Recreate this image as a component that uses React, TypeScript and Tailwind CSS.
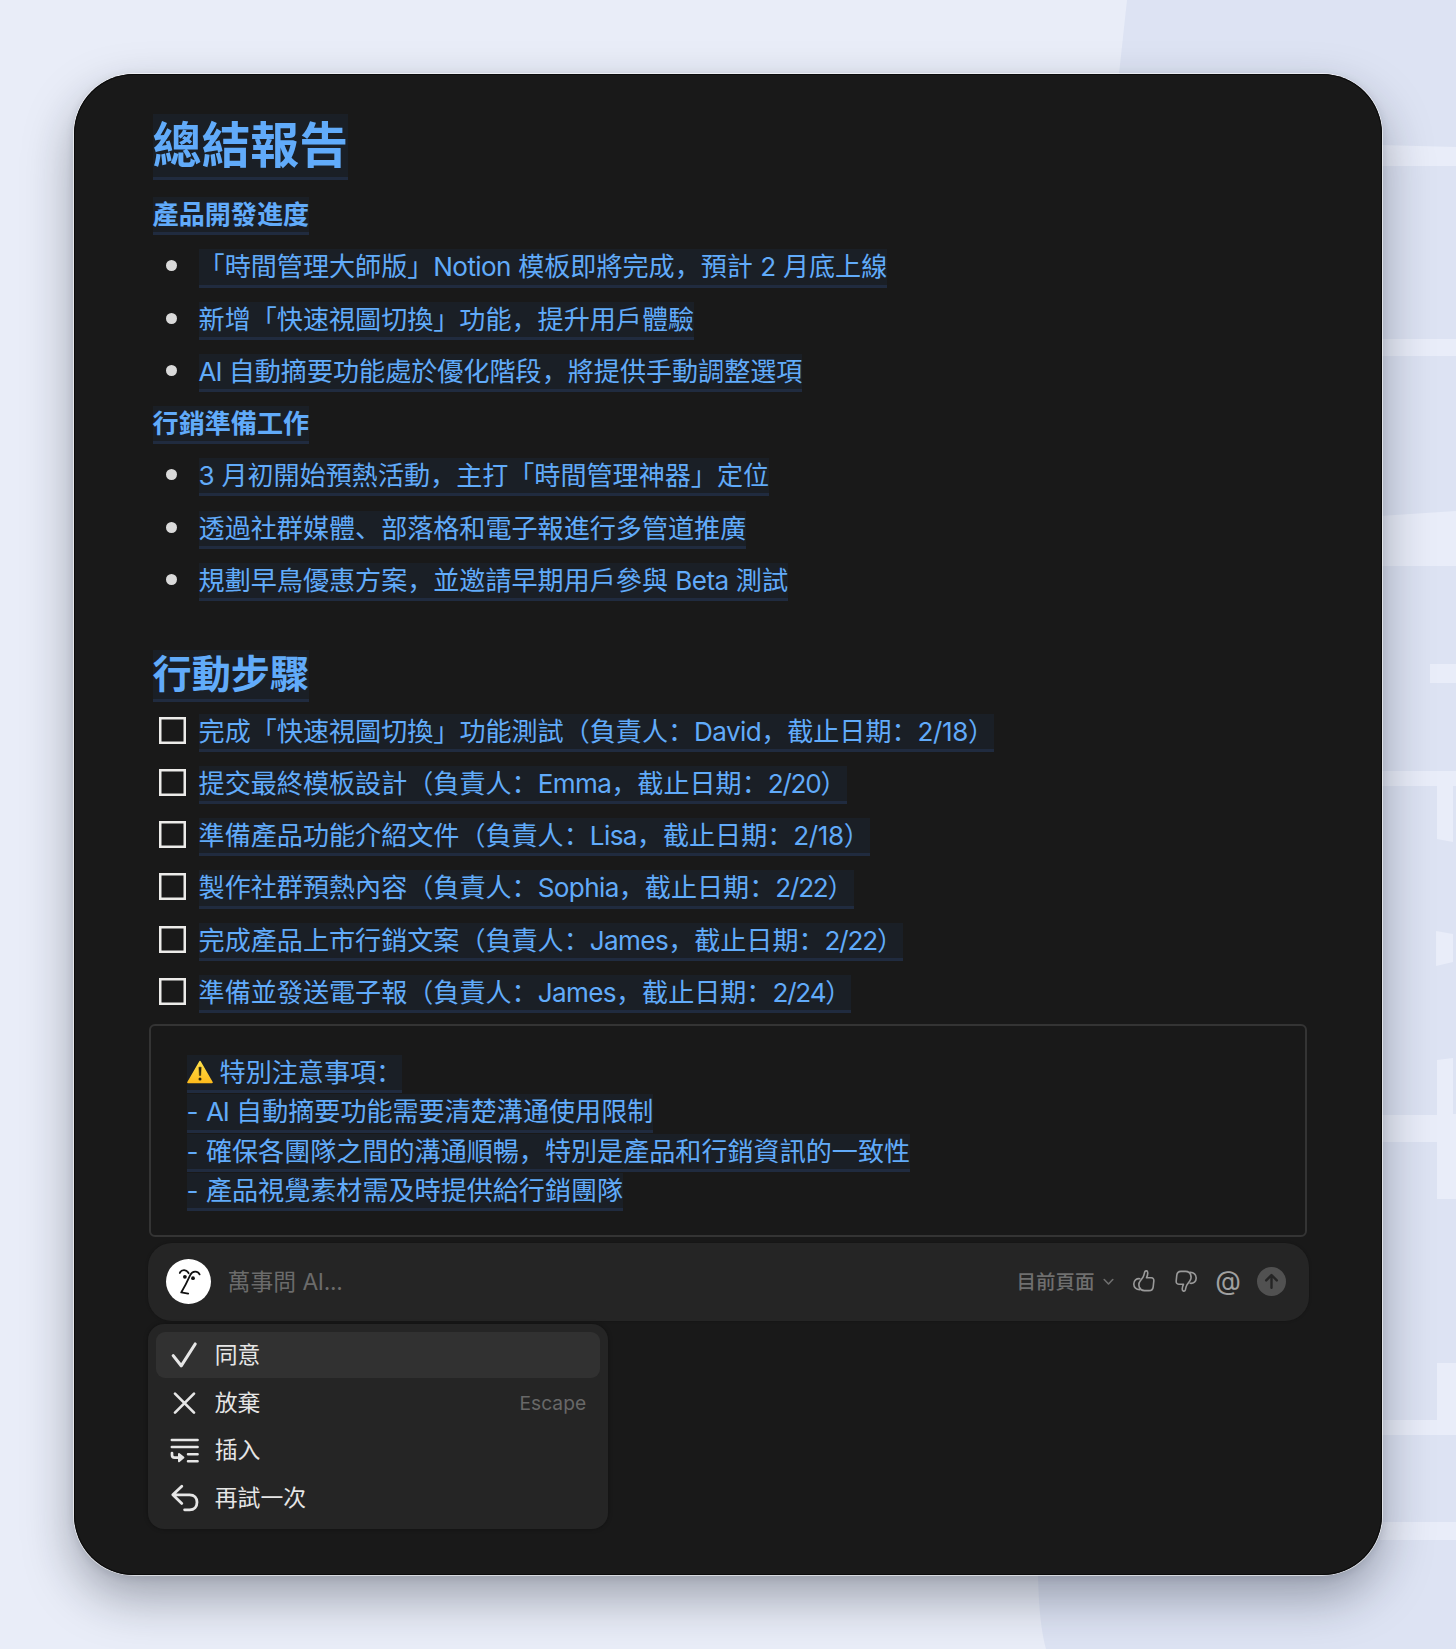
import React from "react";

const BASE = "text-[26.08px] leading-[36px]";

function tracking(run: string) {
  if (/^2\/2/.test(run)) return "tracking-[-1.2px]";
  if (/^2\/1/.test(run)) return "tracking-[-0.4px]";
  if (run === "AI") return "tracking-[-1.1px]";
  return "tracking-[-0.6px]";
}

/* Splits Latin runs out so that they can be tracked separately from the CJK text. */
function Mixed({ text }: { text: string }) {
  const parts = text.split(/([A-Za-z0-9/]+)/);
  return (
    <>
      {parts.map((part, i) =>
        i % 2 === 1 ? (
          <span key={i} className={tracking(part)}>
            {part}
          </span>
        ) : (
          <React.Fragment key={i}>{part}</React.Fragment>
        )
      )}
    </>
  );
}

function Mark({ children, className = "" }: { children: React.ReactNode; className?: string }) {
  return (
    <span
      className={`block w-fit whitespace-pre border-b-[3px] border-[#202b3f] bg-[#1a1f26] text-[#61abfa] ${className}`}
    >
      {children}
    </span>
  );
}

function SubHeading({ text }: { text: string }) {
  return <Mark className={`h-[38.2px] font-bold ${BASE}`}>{text}</Mark>;
}

function Bullet({ text }: { text: string }) {
  return (
    <li className="flex h-[38.2px]">
      <span className="mt-[11px] ml-[13.7px] mr-[21.3px] size-[11px] shrink-0 rounded-full bg-[#dadada]" />
      <Mark className={`h-[38.2px] ${BASE}`}>
        <Mixed text={text} />
      </Mark>
    </li>
  );
}

function Todo({ text }: { text: string }) {
  return (
    <li className="flex h-[38.2px]">
      <span className="mt-[3px] ml-[6px] mr-[13px] size-[27px] shrink-0 shadow-[inset_0_0_0_2.5px_#ecebe9]" />
      <Mark className={`h-[38.2px] ${BASE}`}>
        <Mixed text={text} />
      </Mark>
    </li>
  );
}

function Backdrop() {
  return (
    <svg className="absolute inset-0" width="1456" height="1649" viewBox="0 0 1456 1649" aria-hidden="true">
      <rect width="1456" height="1649" fill="#e9edf8" />
      <path d="M1127 0 L1119 74 L1040 800 L1038 1575 Q1039 1625 1046 1649 L1456 1649 L1456 0Z" fill="#dde3f3" />
      <g fill="#e9edf9">
        <path d="M1380 145 L1456 147 V166 H1380Z" />
        <rect x="1380" y="339" width="76" height="17" />
        <path d="M1380 516 L1456 511 V566 H1380Z" />
        <rect x="1430" y="664" width="26" height="19" />
        <rect x="1380" y="771" width="76" height="15" />
        <path d="M1437 785 H1453 V842 L1437 839Z" />
        <path d="M1436 931 L1453 934 V962 L1436 966Z" />
        <path d="M1437 1060 L1453 1058 V1114 H1456 V1199 H1437 V1142 H1380 V1115 H1437Z" />
        <path d="M1437 1363 H1456 V1435 H1380 V1420 H1437Z" />
        <rect x="1380" y="1522" width="76" height="18" />
      </g>
    </svg>
  );
}

function WarningIcon() {
  return (
    <svg className="mt-[5px] mr-[7px] shrink-0" width="26" height="24" viewBox="0 0 26 24">
      <defs>
        <linearGradient id="warn" x1="0" y1="0" x2="0" y2="1">
          <stop offset="0" stopColor="#ffe04a" />
          <stop offset="1" stopColor="#fdbb1d" />
        </linearGradient>
      </defs>
      <path d="M13 1.6 L25 22.4 H1Z" fill="url(#warn)" stroke="url(#warn)" strokeWidth="1.6" strokeLinejoin="round" />
      <path d="M11.9 7.2 h2.3 l-.5 8.4 h-1.3z" fill="#2b2410" stroke="#2b2410" strokeWidth=".5" strokeLinejoin="round" />
      <circle cx="13" cy="19" r="1.5" fill="#2b2410" />
    </svg>
  );
}

function Face() {
  return (
    <svg width="45" height="45" viewBox="0 0 45 45" className="mb-[2px] shrink-0">
      <circle cx="22.5" cy="22.5" r="22.5" fill="#fff" />
      <g fill="none" stroke="#111" strokeWidth="1.8" strokeLinecap="round" strokeLinejoin="round">
        <path d="M13.8 14 C15.2 10.4 20.6 10 22.6 14.2" />
        <path d="M33.6 15.4 C31.6 11.8 26.6 11.6 24.2 16.2 C21.6 22 18.6 28 15.2 33.4 L22.2 34.6" />
      </g>
      <circle cx="18.9" cy="17.8" r="1.9" fill="#111" />
      <circle cx="27" cy="19.2" r="1.9" fill="#111" />
    </svg>
  );
}

function Thumb({ flipped = false }: { flipped?: boolean }) {
  return (
    <svg
      width="24"
      height="24"
      viewBox="0 0 24 24"
      fill="none"
      stroke="#9a9a9a"
      strokeWidth="1.6"
      strokeLinejoin="round"
      strokeLinecap="round"
      className={flipped ? "rotate-180" : ""}
    >
      <path d="M8.2 12 L10.8 8.6 C12 6.8 12.2 5 12.7 3 C13.2 1.3 15.8 1.4 15.8 3.9 C15.7 5.9 15.2 7.3 14.5 8.8 H19.2 C21.4 8.8 22 10.4 21.8 12.2 L21.2 17.8 C20.9 20.4 19.6 21.6 17 21.6 H12.4 C9.8 21.6 8.2 20.4 7.4 18.4 C6.6 16.2 6.8 13.8 8.2 12Z" />
      <path d="M7.8 9.7 C4.4 9.3 1.8 11.6 1.8 15 C1.8 18.4 4.2 20.8 8 20.6" />
    </svg>
  );
}

function PromptBar() {
  return (
    <div className="ml-[-5px] mr-[-6px] mt-[6.2px] flex h-[78px] items-center rounded-[24px] bg-[#252525] pl-[18px] pr-[23.5px] shadow-[0_0_3px_rgba(0,0,0,0.25)]">
      <Face />
      <span className="ml-[17px] text-[22.8px] leading-[32px] text-[#6b6b6b]">
        萬事問 <span className="tracking-[-0.3px]">AI...</span>
      </span>
      <span className="ml-auto text-[19.5px] font-medium leading-[28px] text-[#6f6f6f]">目前頁面</span>
      <svg className="ml-[8px]" width="11" height="8" viewBox="0 0 11 8" fill="none" stroke="#6f6f6f" strokeWidth="1.6" strokeLinecap="round" strokeLinejoin="round">
        <path d="M1.2 1.5 L5.5 6 L9.8 1.5" />
      </svg>
      <div className="ml-[18px] flex items-center pb-[2px]">
        <Thumb />
        <div className="ml-[18px] flex">
          <Thumb flipped />
        </div>
        <span className="ml-[18px] mb-[3px] flex w-[25px] justify-center text-[26.5px] leading-[28px] text-[#a0a0a0]">@</span>
        <svg className="ml-[16px]" width="29" height="29" viewBox="0 0 29 29">
          <circle cx="14.5" cy="14.5" r="14.5" fill="#515151" />
          <path d="M14.5 20.8 V8.4 M9.2 13.4 L14.5 8 L19.8 13.4" fill="none" stroke="#252525" strokeWidth="2.4" strokeLinecap="round" strokeLinejoin="round" />
        </svg>
      </div>
    </div>
  );
}

const line = {
  fill: "none",
  stroke: "#e6e6e6",
  strokeLinecap: "round",
  strokeLinejoin: "round",
} as const;

function CheckIcon() {
  return (
    <svg width="30" height="30" viewBox="0 0 30 30" {...line} strokeWidth="3.1">
      <path d="M3.2 15.6 L11.2 25.8 L25.2 4" />
    </svg>
  );
}

function CrossIcon() {
  return (
    <svg width="30" height="30" viewBox="0 0 30 30" {...line} strokeWidth="2.7">
      <path d="M5 5.6 L24 24.6 M24 5.6 L5 24.6" />
    </svg>
  );
}

function InsertIcon() {
  return (
    <svg width="30" height="30" viewBox="0 0 30 30" {...line} strokeWidth="2.5">
      <path d="M1.8 5 H27.6 M1.8 12 H27.6 M18 19.2 H27.6 M18 26.2 H27.6" />
      <path d="M2 18 V20 Q2 22.6 4.6 22.6 H9" strokeWidth="2.7" />
      <path d="M9 18.9 L13.4 22.6 L9 26.3Z" fill="#e6e6e6" strokeWidth="2" />
    </svg>
  );
}

function RetryIcon() {
  return (
    <svg width="30" height="30" viewBox="0 0 30 30" {...line} strokeWidth="2.8">
      <path d="M11.8 3.2 L2.8 11.8 L11.8 20.4 M3.2 11.8 H19.6 C24.4 11.8 27 14.8 27 19.2 C27 23.8 24.2 26.8 19.6 26.8 H14.6" />
    </svg>
  );
}

function MenuItem({ icon, label, hint, active = false }: { icon: React.ReactNode; label: string; hint?: string; active?: boolean }) {
  return (
    <div className={`flex h-[46px] items-center rounded-[9px] pl-[14.8px] pr-[13.5px] ${active ? "bg-[#313131]" : ""}`}>
      {icon}
      <span className="ml-[14.4px] text-[22.8px] leading-[32px] text-[#e6e6e6]">{label}</span>
      {hint && <span className="ml-auto text-[19.2px] leading-[28px] text-[#686868]">{hint}</span>}
    </div>
  );
}

function ActionMenu() {
  return (
    <div className="ml-[-5px] mt-[3.3px] flex w-[460px] flex-col gap-[1.4px] rounded-[16px] bg-[#252525] p-[8px] shadow-[0_0_4px_rgba(0,0,0,0.35)]">
      <MenuItem icon={<CheckIcon />} label="同意" active />
      <MenuItem icon={<CrossIcon />} label="放棄" hint="Escape" />
      <MenuItem icon={<InsertIcon />} label="插入" />
      <MenuItem icon={<RetryIcon />} label="再試一次" />
    </div>
  );
}

export default function App() {
  return (
    <div className="relative h-[1649px] w-[1456px] overflow-hidden p-[74px] font-['Inter','Noto_Sans_CJK_SC',sans-serif]">
      <Backdrop />
      <main className="relative h-[1501px] w-[1308px] rounded-[60px] bg-[#191919] pl-[78.6px] pr-[79px] pt-[40px] shadow-[inset_0_0_0_1px_#0b0b0b,0_0_0_1px_rgba(255,255,255,0.6),0_22px_50px_rgba(20,24,38,0.36),0_2px_10px_rgba(20,24,38,0.12)]">
        <Mark className="h-[65.5px] text-[48.9px] font-bold leading-[64px]">總結報告</Mark>

        <section className="mt-[17.6px] flex flex-col gap-[14.05px]">
          <SubHeading text="產品開發進度" />
          <ul className="flex flex-col gap-[14.05px]">
            <Bullet text="「時間管理大師版」Notion 模板即將完成，預計 2 月底上線" />
            <Bullet text="新增「快速視圖切換」功能，提升用戶體驗" />
            <Bullet text="AI 自動摘要功能處於優化階段，將提供手動調整選項" />
          </ul>
          <SubHeading text="行銷準備工作" />
          <ul className="flex flex-col gap-[14.05px]">
            <Bullet text="3 月初開始預熱活動，主打「時間管理神器」定位" />
            <Bullet text="透過社群媒體、部落格和電子報進行多管道推廣" />
            <Bullet text="規劃早鳥優惠方案，並邀請早期用戶參與 Beta 測試" />
          </ul>
        </section>

        <Mark className="mt-[48.6px] h-[52px] text-[39.1px] font-bold leading-[48px]">行動步驟</Mark>
        <ul className="mt-[12.2px] flex flex-col gap-[14.05px]">
          <Todo text="完成「快速視圖切換」功能測試（負責人：David，截止日期：2/18）" />
          <Todo text="提交最終模板設計（負責人：Emma，截止日期：2/20）" />
          <Todo text="準備產品功能介紹文件（負責人：Lisa，截止日期：2/18）" />
          <Todo text="製作社群預熱內容（負責人：Sophia，截止日期：2/22）" />
          <Todo text="完成產品上市行銷文案（負責人：James，截止日期：2/22）" />
          <Todo text="準備並發送電子報（負責人：James，截止日期：2/24）" />
        </ul>

        <section className="mx-[-3.5px] mt-[11.4px] flex h-[212.5px] flex-col gap-[1.1px] rounded-[6px] border-2 border-[#343434] pl-[35.5px] pt-[28.7px]">
          <Mark className={`flex h-[38.2px] ${BASE}`}>
            <WarningIcon />
            <span>特別注意事項：</span>
          </Mark>
          <Mark className={`h-[38.2px] ${BASE}`}>
            <Mixed text="- AI 自動摘要功能需要清楚溝通使用限制" />
          </Mark>
          <Mark className={`h-[38.2px] ${BASE}`}>- 確保各團隊之間的溝通順暢，特別是產品和行銷資訊的一致性</Mark>
          <Mark className={`h-[38.2px] ${BASE}`}>- 產品視覺素材需及時提供給行銷團隊</Mark>
        </section>

        <PromptBar />
        <ActionMenu />
      </main>
    </div>
  );
}
